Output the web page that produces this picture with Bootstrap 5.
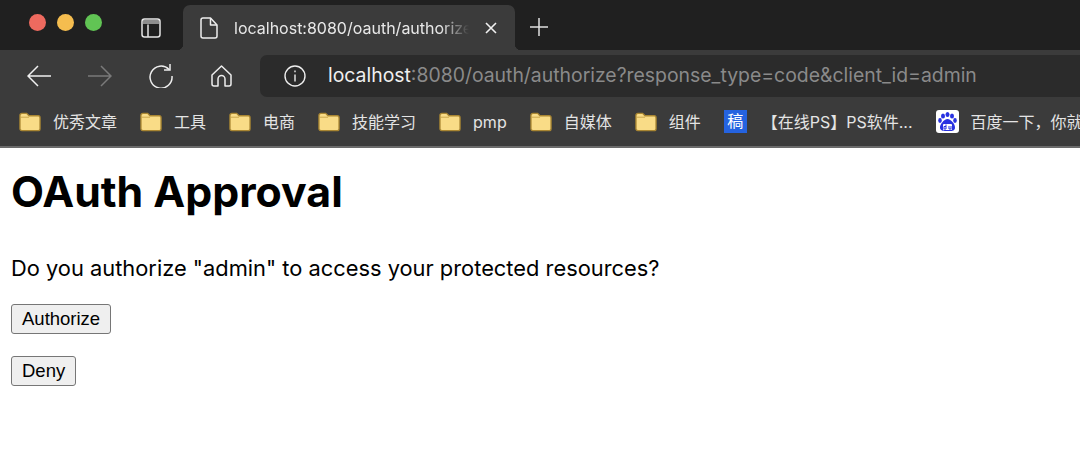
<!DOCTYPE html>
<html lang="en">
<head>
  <meta charset="UTF-8" />
  <title>OAuth Approval</title>
  <link rel="stylesheet" href="https://cdn.jsdelivr.net/npm/bootstrap@5.3.2/dist/css/bootstrap.min.css">
  <style>
    html, body { height: 100%; overflow: hidden; }
    body { font-family: Inter, "Noto Sans CJK SC", sans-serif; background: #fff; color: #000; }
    svg { display: block; flex: none; }
    .chrome-top { height: 50px; background: #202020; padding-left: 29px; }
    .traffic { width: 17px; height: 17px; border-radius: 50%; }
    .tl-red { background: #ee6a5f; }
    .tl-yellow { background: #f5bd4f; }
    .tl-green { background: #61c454; }
    .traffic-set { gap: 11px; margin-top: -6px; }
    .side-icon { margin-left: 39px; margin-right: 22px; margin-top: 6px; }
    .tab-active { position: relative; width: 332px; height: 45px; margin-top: 5px; background: #3b3b3b; border-radius: 7px 7px 0 0; padding-left: 17px; color: #e8e8e8; font-size: 16px; }
    .tab-active::before, .tab-active::after { content: ""; position: absolute; bottom: 0; width: 6px; height: 6px; }
    .tab-active::before { left: -6px; background: radial-gradient(circle at 0 0, #202020 6px, #3b3b3b 6.5px); }
    .tab-active::after { right: -6px; background: radial-gradient(circle at 100% 0, #202020 6px, #3b3b3b 6.5px); }
    .tab-title { width: 235px; margin-left: 16px; overflow: hidden; white-space: nowrap; -webkit-mask-image: linear-gradient(to right, #000 88%, transparent 100%); mask-image: linear-gradient(to right, #000 88%, transparent 100%); }
    .tab-close { margin-left: 15px; }
    .new-tab { margin-left: 14px; margin-top: 4px; }
    .chrome-tools { height: 47px; background: #3b3b3b; padding-top: 5px; }
    .tool-icons { width: 260px; height: 42px; padding-left: 27px; }
    .address { flex: 1; height: 42px; background: #2b2b2b; border-radius: 7px 0 0 7px; padding-left: 24px; font-size: 19.4px; white-space: nowrap; }
    .host { color: #f0f0f0; margin-left: 22px; }
    .rest { color: #8a8a8a; }
    .chrome-marks { height: 51px; background: #3b3b3b; border-bottom: 2px solid #6b6b6b; padding-left: 19px; color: #e4e4e4; font-size: 16px; gap: 23px; white-space: nowrap; overflow: hidden; }
    .mark-item { display: flex; align-items: center; gap: 12px; flex: none; }
    .mark-wide { gap: 15px; }
    .fav-gao { width: 23px; height: 23px; background: #2563e0; color: #fff; font-size: 16px; line-height: 23px; text-align: center; }
    .fav-du { width: 23px; height: 23px; background: #fff; border-radius: 3px; }
    .page-body { padding: 18px 11px 0; }
    .page-title { font-size: 42.8px; font-weight: 700; line-height: 52px; margin: 0 0 36px; }
    .page-text { font-size: 21.85px; line-height: 28px; margin: 0 0 22px; }
    .plain-btn { display: block; font-family: "Liberation Sans", sans-serif; font-size: 18.5px; line-height: 22px; height: 30px; padding: 2px 10px; background: #efefef; border: 1.5px solid #767676; border-radius: 3px; color: #000; margin-bottom: 22px; }
  </style>
</head>
<body>
  <div class="chrome-top d-flex align-items-center">
    <div class="traffic-set d-flex">
      <div class="traffic tl-red"></div>
      <div class="traffic tl-yellow"></div>
      <div class="traffic tl-green"></div>
    </div>
    <svg class="side-icon" width="20" height="20" viewBox="0 0 20 20" fill="none" stroke="#e6e6e6" stroke-width="1.5">
      <path d="M2 2h16v4H2z" fill="#8e8e8e" stroke="none"/>
      <rect x="1" y="1" width="18" height="18" rx="2.5"/>
      <path d="M7 6.5V19"/>
    </svg>
    <div class="tab-active d-flex align-items-center">
      <svg width="18" height="22" viewBox="0 0 18 22" fill="none" stroke="#eee" stroke-width="1.5" stroke-linejoin="round">
        <path d="M3 1H10.5L17 8V19a2 2 0 0 1-2 2H3a2 2 0 0 1-2-2V3a2 2 0 0 1 2-2Z"/>
        <path d="M10.5 1V8H17"/>
      </svg>
      <div class="tab-title">localhost:8080/oauth/authorize</div>
      <svg class="tab-close" width="14" height="14" viewBox="0 0 14 14" stroke="#f0f0f0" stroke-width="1.6">
        <path d="M2 2 12 12M12 2 2 12"/>
      </svg>
    </div>
    <svg class="new-tab" width="20" height="20" viewBox="0 0 20 20" stroke="#e0e0e0" stroke-width="1.5">
      <path d="M10 1V19M1 10H19"/>
    </svg>
  </div>

  <div class="chrome-tools d-flex">
    <div class="tool-icons d-flex align-items-center">
      <svg width="24" height="22" viewBox="0 0 24 22" fill="none" stroke="#f0f0f0" stroke-width="1.5">
        <path d="M24 11H1M11 1 1 11 11 21"/>
      </svg>
      <svg style="margin-left:37px" width="24" height="22" viewBox="0 0 24 22" fill="none" stroke="#7a7a7a" stroke-width="1.5">
        <path d="M0 11H23M13 1 23 11 13 21"/>
      </svg>
      <svg style="margin-left:37px" width="24" height="24" viewBox="0 0 24 24" fill="none" stroke="#eee" stroke-width="1.5">
        <path d="M20 5.5A11 11 0 1 0 23 12"/>
        <path d="M21 0V6H15"/>
      </svg>
      <svg style="margin-left:38px" width="21" height="22" viewBox="0 0 21 22" fill="none" stroke="#eee" stroke-width="1.5" stroke-linejoin="round">
        <path d="M10.5 1 1 10V19a2 2 0 0 0 2 2H7V14a3.5 3.5 0 0 1 7 0V21H18a2 2 0 0 0 2-2V10Z"/>
      </svg>
    </div>
    <div class="address d-flex align-items-center">
      <svg width="22" height="22" viewBox="0 0 22 22" fill="none" stroke="#eee" stroke-width="1.4">
        <circle cx="11" cy="11" r="10"/>
        <path d="M11 9.5V16.5"/>
        <path d="M11 5.5V7.2"/>
      </svg>
      <span class="host">localhost</span><span class="rest">:8080/oauth/authorize?response_type=code&amp;client_id=admin</span>
    </div>
  </div>

  <div class="chrome-marks d-flex align-items-center">
    <div class="mark-item"><svg width="22" height="20" viewBox="0 0 23 20"><use href="#folder"/></svg>优秀文章</div>
    <div class="mark-item"><svg width="22" height="20" viewBox="0 0 23 20"><use href="#folder"/></svg>工具</div>
    <div class="mark-item"><svg width="22" height="20" viewBox="0 0 23 20"><use href="#folder"/></svg>电商</div>
    <div class="mark-item"><svg width="22" height="20" viewBox="0 0 23 20"><use href="#folder"/></svg>技能学习</div>
    <div class="mark-item"><svg width="22" height="20" viewBox="0 0 23 20"><use href="#folder"/></svg>pmp</div>
    <div class="mark-item"><svg width="22" height="20" viewBox="0 0 23 20"><use href="#folder"/></svg>自媒体</div>
    <div class="mark-item"><svg width="22" height="20" viewBox="0 0 23 20"><use href="#folder"/></svg>组件</div>
    <div class="mark-item mark-wide"><div class="fav-gao">稿</div>【在线PS】PS软件...</div>
    <div class="mark-item">
      <svg class="fav-du" viewBox="0 0 23 23">
        <g fill="#2932e1">
          <ellipse cx="7" cy="6" rx="2" ry="2.6"/>
          <ellipse cx="11.5" cy="4.5" rx="2" ry="2.6"/>
          <ellipse cx="16" cy="6" rx="2" ry="2.6"/>
          <ellipse cx="4" cy="10.5" rx="1.8" ry="2.4"/>
          <ellipse cx="19" cy="10.5" rx="1.8" ry="2.4"/>
          <path d="M11.5 9C8 9 3.5 15 4 18s4 3 7.5 3 7 .5 7.5-3-4-9-7.5-9Z"/>
        </g>
        <rect x="7" y="14" width="9" height="6" rx="1" fill="#fff"/>
        <path d="M10 14.5V19H8V16.5H10M13 16V19H15V16" fill="none" stroke="#2932e1" stroke-width="1"/>
      </svg>
      百度一下，你就
    </div>
  </div>

  <div class="page-body">
    <h1 class="page-title">OAuth Approval</h1>
    <p class="page-text">Do you authorize "admin" to access your protected resources?</p>
    <button type="button" class="plain-btn">Authorize</button>
    <button type="button" class="plain-btn">Deny</button>
  </div>

  <svg width="0" height="0" class="position-absolute">
    <defs>
      <g id="folder">
        <path d="M1 3a2 2 0 0 1 2-2H8l2.5 2.5H20a2 2 0 0 1 2 2V17a2 2 0 0 1-2 2H3a2 2 0 0 1-2-2Z" fill="#f9dc87" stroke="#a98632" stroke-width="1.4"/>
        <path d="M1.5 5H10.5" stroke="#c9a64a" stroke-width="1"/>
      </g>
    </defs>
  </svg>
</body>
</html>
